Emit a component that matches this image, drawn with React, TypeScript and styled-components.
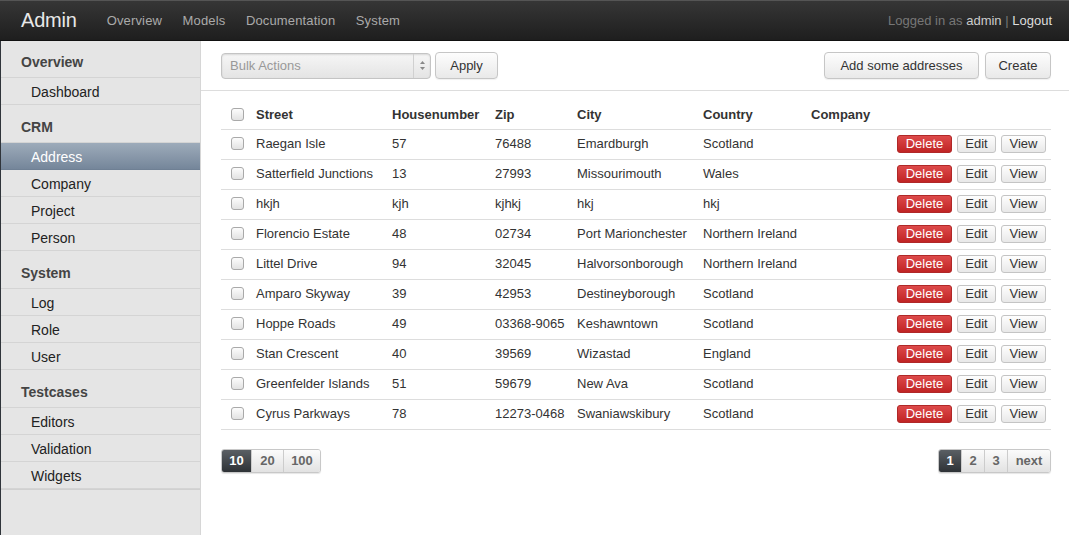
import React from "react";
import styled, { createGlobalStyle } from "styled-components";

const Global = createGlobalStyle`
  html, body { margin: 0; padding: 0; height: 100%; }
  body { font-family: "Liberation Sans", Arial, sans-serif; font-size: 13px; color: #333; background: #fff; }
  #root { min-height: 100%; }
  * { box-sizing: border-box; }
`;

const Page = styled.div`
  display: flex;
  flex-direction: column;
  min-height: 100vh;
`;

const Navbar = styled.header`
  height: 41px;
  flex: none;
  display: flex;
  align-items: center;
  padding: 0 17px 0 21px;
  background: linear-gradient(#363636, #1e1e1e);
  border-top: 1px solid #555;
  border-bottom: 1px solid #111;
`;

const Brand = styled.div`
  font-size: 20px;
  color: #e8e8e8;
  margin-right: 30px;
  letter-spacing: -0.2px;
`;

const NavLinks = styled.nav`
  display: flex;
  gap: 20.5px;
  flex: 1;
`;

const NavLink = styled.a`
  color: #aaa;
  font-size: 13px;
  letter-spacing: 0.15px;
  text-decoration: none;
`;

const UserInfo = styled.div`
  font-size: 13px;
  color: #777;
`;

const Light = styled.span<{ $c: string }>`
  color: ${(p) => p.$c};
`;

const Body = styled.div`
  display: flex;
  flex: 1;
`;

const Sidebar = styled.aside`
  width: 201px;
  flex: none;
  background: #e5e5e5;
  border-left: 1px solid #2f343a;
  border-right: 1px solid #d6d6d6;
`;

const NavList = styled.div`
  border-bottom: 1px solid #d0d0d0;
`;

const SideHeader = styled.div<{ $first?: boolean }>`
  padding: ${(p) => (p.$first ? "13px" : "14px")} 20px 7px;
  line-height: 16px;
  font-size: 14px;
  font-weight: bold;
  color: #444;
  border-bottom: 1px solid #d4d4d4;
`;

const SideItem = styled.div<{ $active?: boolean }>`
  padding: 6px 30px 4px;
  line-height: 16px;
  font-size: 14px;
  color: ${(p) => (p.$active ? "#fff" : "#222")};
  background: ${(p) => (p.$active ? "linear-gradient(#9dabba, #75869a)" : "transparent")};
  border-bottom: 1px solid ${(p) => (p.$active ? "#6f8094" : "#d4d4d4")};
`;

const Main = styled.main`
  flex: 1;
  padding: 0 18px 0 20px;
`;

const Toolbar = styled.div`
  height: 50px;
  display: flex;
  align-items: center;
  gap: 4px;
  border-bottom: 1px solid #ddd;
  margin: 0 -18px 0 -20px;
  padding: 0 18px 0 20px;
`;

const Spacer = styled.div`
  flex: 1;
`;

const Select = styled.div`
  width: 210px;
  height: 26px;
  display: flex;
  align-items: center;
  border: 1px solid #c4c4c4;
  border-radius: 4px;
  background: linear-gradient(#f6f6f6, #e4e4e4);
  box-shadow: inset 0 1px 2px rgba(0, 0, 0, 0.12);
  color: #999;
  font-size: 13px;
`;

const SelectLabel = styled.span`
  flex: 1;
  padding-left: 8px;
`;

const SelectArrow = styled.span`
  width: 17px;
  height: 100%;
  border-left: 1px solid #d0d0d0;
  display: flex;
  align-items: center;
  justify-content: center;
`;

const Button = styled.button<{ $w?: number; $gap?: number }>`
  height: 27px;
  width: ${(p) => (p.$w ? `${p.$w}px` : "auto")};
  padding: 0 12px;
  font-family: inherit;
  font-size: 13px;
  color: #333;
  border: 1px solid #c6c6c6;
  border-radius: 4px;
  background: linear-gradient(#fdfdfd, #e9e9e9);
  box-shadow: 0 1px 1px rgba(0, 0, 0, 0.06);
  margin-left: ${(p) => p.$gap ?? 0}px;
`;

const Table = styled.table`
  width: 100%;
  border-collapse: collapse;
  table-layout: fixed;
  margin-top: 10px;
`;

const Th = styled.th`
  height: 28px;
  text-align: left;
  font-weight: bold;
  font-size: 13px;
  color: #333;
  padding: 0;
  border-bottom: 1px solid #ddd;
`;

const Td = styled.td<{ $right?: boolean }>`
  height: 30px;
  padding: 0 ${(p) => (p.$right ? "5px" : "0")} 2px 0;
  font-size: 13px;
  color: #333;
  border-bottom: 1px solid #ddd;
  text-align: ${(p) => (p.$right ? "right" : "left")};
  white-space: nowrap;
`;

const CheckCell = styled.div`
  padding-left: 10px;
  display: flex;
  align-items: center;
`;

const Check = styled.input.attrs({ type: "checkbox" })`
  appearance: none;
  margin: 0;
  width: 13px;
  height: 13px;
  border: 1px solid #a9a9a9;
  border-radius: 3px;
  background: linear-gradient(#fcfcfc, #e2e2e2);
`;

const Actions = styled.div`
  display: inline-flex;
  gap: 5px;
  vertical-align: middle;
  margin-top: 2px;
`;

const SmallButton = styled.button<{ $danger?: boolean; $w: number }>`
  height: 18px;
  width: ${(p) => p.$w}px;
  padding: 0;
  font-family: inherit;
  font-size: 13px;
  line-height: 16px;
  border-radius: 3px;
  color: ${(p) => (p.$danger ? "#fff" : "#333")};
  border: 1px solid ${(p) => (p.$danger ? "#b02828" : "#c4c4c4")};
  background: ${(p) =>
    p.$danger ? "linear-gradient(#dd4a4a, #c02424)" : "linear-gradient(#fefefe, #e8e8e8)"};
`;

const Footer = styled.div`
  display: flex;
  justify-content: space-between;
  margin-top: 19px;
`;

const Group = styled.div`
  display: flex;
  border: 1px solid #c8c8c8;
  border-radius: 3px;
  overflow: hidden;
  box-shadow: 0 1px 1px rgba(0, 0, 0, 0.1);
`;

const PageBtn = styled.span<{ $active?: boolean; $w: number }>`
  width: ${(p) => p.$w}px;
  height: 22px;
  display: flex;
  align-items: center;
  justify-content: center;
  font-size: 13px;
  font-weight: bold;
  color: ${(p) => (p.$active ? "#fff" : "#666")};
  background: ${(p) =>
    p.$active ? "linear-gradient(#5a5f64, #2e3236)" : "linear-gradient(#fbfbfb, #e2e2e2)"};
  & + & {
    border-left: 1px solid #ccc;
  }
`;

type Row = [string, string, string, string, string];
const rows: Row[] = [
  ["Raegan Isle", "57", "76488", "Emardburgh", "Scotland"],
  ["Satterfield Junctions", "13", "27993", "Missourimouth", "Wales"],
  ["hkjh", "kjh", "kjhkj", "hkj", "hkj"],
  ["Florencio Estate", "48", "02734", "Port Marionchester", "Northern Ireland"],
  ["Littel Drive", "94", "32045", "Halvorsonborough", "Northern Ireland"],
  ["Amparo Skyway", "39", "42953", "Destineyborough", "Scotland"],
  ["Hoppe Roads", "49", "03368-9065", "Keshawntown", "Scotland"],
  ["Stan Crescent", "40", "39569", "Wizastad", "England"],
  ["Greenfelder Islands", "51", "59679", "New Ava", "Scotland"],
  ["Cyrus Parkways", "78", "12273-0468", "Swaniawskibury", "Scotland"],
];

const sections: { title: string; items: string[] }[] = [
  { title: "Overview", items: ["Dashboard"] },
  { title: "CRM", items: ["Address", "Company", "Project", "Person"] },
  { title: "System", items: ["Log", "Role", "User"] },
  { title: "Testcases", items: ["Editors", "Validation", "Widgets"] },
];

const Arrows = () => (
  <svg width="7" height="11" viewBox="0 0 7 11">
    <path d="M3.5 1 L6 4 L1 4 Z" fill="#888" />
    <path d="M3.5 10 L6 7 L1 7 Z" fill="#888" />
  </svg>
);

export default function App() {
  return (
    <Page>
      <Global />
      <Navbar>
        <Brand>Admin</Brand>
        <NavLinks>
          <NavLink>Overview</NavLink>
          <NavLink>Models</NavLink>
          <NavLink>Documentation</NavLink>
          <NavLink>System</NavLink>
        </NavLinks>
        <UserInfo>
          Logged in as <Light $c="#ccc">admin</Light> <Light $c="#777">|</Light>{" "}
          <Light $c="#ddd">Logout</Light>
        </UserInfo>
      </Navbar>
      <Body>
        <Sidebar>
          <NavList>
            {sections.map((s, i) => (
              <React.Fragment key={s.title}>
                <SideHeader $first={i === 0}>{s.title}</SideHeader>
                {s.items.map((it) => (
                  <SideItem key={it} $active={it === "Address"}>
                    {it}
                  </SideItem>
                ))}
              </React.Fragment>
            ))}
          </NavList>
        </Sidebar>
        <Main>
          <Toolbar>
            <Select>
              <SelectLabel>Bulk Actions</SelectLabel>
              <SelectArrow>
                <Arrows />
              </SelectArrow>
            </Select>
            <Button $w={63}>Apply</Button>
            <Spacer />
            <Button $w={155}>Add some addresses</Button>
            <Button $w={66} $gap={2}>Create</Button>
          </Toolbar>
          <Table>
            <colgroup>
              <col style={{ width: 35 }} />
              <col style={{ width: 136 }} />
              <col style={{ width: 103 }} />
              <col style={{ width: 82 }} />
              <col style={{ width: 126 }} />
              <col style={{ width: 108 }} />
              <col style={{ width: 80 }} />
              <col />
            </colgroup>
            <thead>
              <tr>
                <Th>
                  <CheckCell>
                    <Check />
                  </CheckCell>
                </Th>
                <Th>Street</Th>
                <Th>Housenumber</Th>
                <Th>Zip</Th>
                <Th>City</Th>
                <Th>Country</Th>
                <Th>Company</Th>
                <Th />
              </tr>
            </thead>
            <tbody>
              {rows.map((r, i) => (
                <tr key={i}>
                  <Td>
                    <CheckCell>
                      <Check />
                    </CheckCell>
                  </Td>
                  {r.map((c, j) => (
                    <Td key={j}>{c}</Td>
                  ))}
                  <Td />
                  <Td $right>
                    <Actions>
                      <SmallButton $danger $w={55}>
                        Delete
                      </SmallButton>
                      <SmallButton $w={39}>Edit</SmallButton>
                      <SmallButton $w={45}>View</SmallButton>
                    </Actions>
                  </Td>
                </tr>
              ))}
            </tbody>
          </Table>
          <Footer>
            <Group>
              <PageBtn $active $w={29}>10</PageBtn>
              <PageBtn $w={32}>20</PageBtn>
              <PageBtn $w={37}>100</PageBtn>
            </Group>
            <Group>
              <PageBtn $active $w={22}>1</PageBtn>
              <PageBtn $w={23}>2</PageBtn>
              <PageBtn $w={23}>3</PageBtn>
              <PageBtn $w={43}>next</PageBtn>
            </Group>
          </Footer>
        </Main>
      </Body>
    </Page>
  );
}
